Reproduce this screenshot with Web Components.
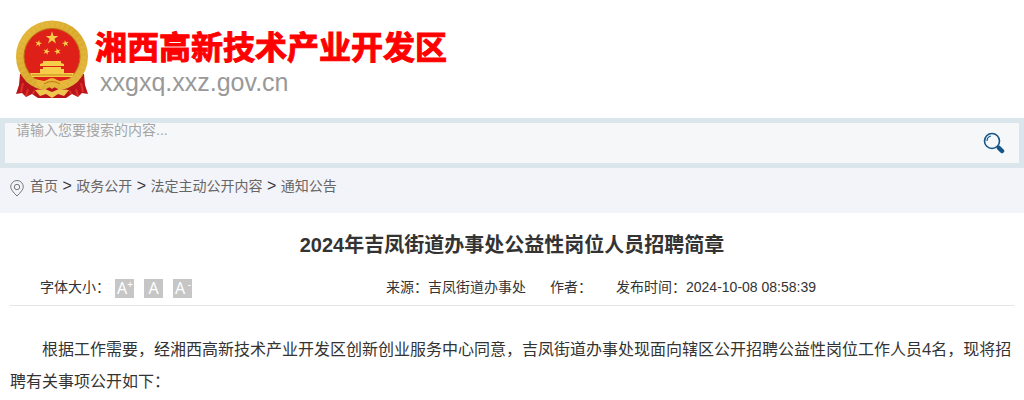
<!DOCTYPE html>
<html lang="zh-CN">
<head>
<meta charset="utf-8">
<title>2024年吉凤街道办事处公益性岗位人员招聘简章</title>
<style>
body { margin: 0; background: #fff; color: #333; font-family: "Liberation Sans", "Noto Sans CJK SC", sans-serif; font-size: 14px; }
</style>
</head>
<body>
<gov-page></gov-page>

<template id="t-page">
<style>
:host { display: block; }
</style>
<site-header></site-header>
<site-search></site-search>
<bread-crumb></bread-crumb>
<news-article>
  <span slot="title">2024年吉凤街道办事处公益性岗位人员招聘简章</span>
  <article-meta slot="meta"></article-meta>
  <span slot="body">根据工作需要，经湘西高新技术产业开发区创新创业服务中心同意，吉凤街道办事处现面向辖区公开招聘公益性岗位工作人员4名，现将招聘有关事项公开如下：</span>
</news-article>
</template>

<template id="t-emblem">
<style>
:host { display: block; }
svg { display: block; }
</style>
<svg width="74" height="80" viewBox="0 0 74 80" aria-hidden="true">
  <defs>
    <path id="star" d="M0-10 2.3-3.1H9.5L3.7 1.2 5.9 8.1 0 3.8-5.9 8.1-3.7 1.2-9.5-3.1H-2.3Z"/>
    <linearGradient id="gold" x1="0" y1="0" x2="1" y2="1">
      <stop offset="0" stop-color="#e6ba3d"/><stop offset=".5" stop-color="#d9a92c"/><stop offset="1" stop-color="#e6ba42"/>
    </linearGradient>
  </defs>
  <path d="M5 54 4 65 1 74 7 73 11 77 17 74 23 78H51L57 74 63 77 67 73 73 74 70 65 69 54Z" fill="#b9141a"/>
  <path d="M8 63 6 72M14 66 11 76M20 68 18 74M60 66 63 76M66 63 68 72M54 68 56 74" stroke="#df302a" stroke-width="2"/>
  <circle cx="37" cy="36.500" r="36" fill="url(#gold)"/>
  <circle cx="37" cy="36.500" r="32" fill="none" stroke="#f0cb57" stroke-width="5" stroke-dasharray="2 3" opacity=".25"/>
  <circle cx="37" cy="36.500" r="28" fill="#df2018" stroke="#bd6d18"/>
  <g fill="#f6cc48">
    <use href="#star" transform="translate(37 18) scale(.67)"/>
    <use href="#star" transform="translate(23.500 23.500) rotate(10) scale(.36)"/>
    <use href="#star" transform="translate(50.500 23.500) rotate(-10) scale(.36)"/>
    <use href="#star" transform="translate(31.500 31.500) rotate(15) scale(.36)"/>
    <use href="#star" transform="translate(42.500 31.500) rotate(-15) scale(.36)"/>
    <path d="M28 41H46V43L49 44V46H25V44L28 43ZM28 47H46V49H28ZM25 49H49V53H59L57 57H17L15 53H25Z"/>
  </g>
  <path d="M17 55H57" stroke="#c58918"/>
  <path d="M11 62Q23 71 31 69Q37 65 43 69Q51 71 63 62L62 69 53 71 48 77H26L21 71 12 69Z" fill="#b9141a"/>
  <path d="M20 59 29 61 32 60Q37 56 42 60L45 61 54 59 50 67 42 65 37 69 32 65 24 67Z" fill="#e8b63b"/>
  <path d="M29 64Q37 59 45 64" fill="none" stroke="#bd7719"/>
  <path d="M20 70 30 69 37 72 44 69 54 70 49 76 43 74 37 78 31 74 25 76Z" fill="#efc650"/>
</svg>
</template>

<template id="t-header">
<style>
:host { display: block; }
header { display: flex; padding: 20px 15px 18px; gap: 6px; }
h1 { margin: 1px 0 0; font: 700 32px/48px "Noto Sans CJK SC", sans-serif; color: #f00; -webkit-text-stroke: 1px #f00; white-space: nowrap; }
p { margin: 2px 0 0 5px; font-size: 25px; line-height: 22px; color: #999; }
</style>
<header>
  <state-emblem></state-emblem>
  <div><h1>湘西高新技术产业开发区</h1><p>xxgxq.xxz.gov.cn</p></div>
</header>
</template>

<template id="t-search">
<style>
:host { display: block; }
form { display: flex; align-items: flex-start; border: 5px solid #dbe5ec; background: #f5f7f9; height: 40px; }
input { flex: 1; min-width: 0; height: 14px; margin: 0; padding: 0 11px; border: 0; outline: 0; background: none; font: inherit; color: #333; }
input::placeholder { color: #a5a5a5; opacity: 1; }
button { width: 50px; height: 40px; padding: 0; border: 0; background: none; display: grid; place-items: center; cursor: pointer; }
</style>
<form role="search">
  <input type="text" placeholder="请输入您要搜索的内容..." aria-label="搜索">
  <button type="button" aria-label="搜索">
    <svg width="22" height="22" viewBox="0 0 22 22" fill="none" stroke="#155488">
      <circle cx="9" cy="9" r="7.500" stroke-width="1.600"/>
      <path d="M4 9Q4 5 8 4" stroke-width="1.200"/>
      <path d="m14 14 2 2" stroke-width="2"/>
      <path d="m16 16 3 3" stroke-width="4.500" stroke-linecap="round"/>
    </svg>
  </button>
</form>
</template>

<template id="t-crumb">
<style>
:host { display: block; background: #f3f4f9; }
nav { display: flex; gap: 6px; padding: 8px 10px 16px; font-size: 16px; line-height: 20px; }
svg { display: block; margin-top: 4px; }
a { font-size: 14px; color: #666; text-decoration: none; }
</style>
<nav aria-label="当前位置">
  <svg width="14" height="17" viewBox="0 0 14 17" fill="none" stroke="#777"><path d="M7 16Q.7 10 .7 6.800A6.300 6.300 0 0 1 13.300 6.800Q13.300 10 7 16Z"/><circle cx="7" cy="7" r="2.700"/></svg>
  <div><a href="#">首页</a> &gt; <a href="#">政务公开</a> &gt; <a href="#">法定主动公开内容</a> &gt; <a href="#">通知公告</a></div>
</nav>
</template>

<template id="t-article">
<style>
:host { display: block; padding: 16px 10px; }
h2 { margin: 0; font-size: 20px; line-height: 32px; text-align: center; }
p { margin: 27px 0 0; font: 16px/32px "Noto Sans", "Noto Sans CJK SC", sans-serif; text-indent: 32px; }
</style>
<article>
  <h2><slot name="title"></slot></h2>
  <slot name="meta"></slot>
  <p><slot name="body"></slot></p>
</article>
</template>

<template id="t-meta">
<style>
:host { display: flex; align-items: center; margin-top: 8px; padding: 0 4px 0 30px; height: 36px; border-bottom: 1px solid #e5e5e5; line-height: 20px; white-space: nowrap; }
.size { display: flex; align-items: center; gap: 10px; }
.label { width: 65px; }
.info { flex: 1; display: flex; justify-content: center; gap: 24px; }
button { display: block; position: relative; width: 19px; height: 19px; margin: 2px 0 0; padding: 0 0 0 2px; border: 0; background: #c6c6c6; color: #fff; font: 16px/19px "Noto Sans", sans-serif; text-align: left; }
button.plain { padding: 0; text-align: center; }
sup { position: absolute; right: 1px; top: 0; font-size: 10px; line-height: 11px; }
</style>
<div class="size"><span class="label">字体大小：</span><button type="button" aria-label="放大字体">A<sup>+</sup></button><button type="button" class="plain" aria-label="默认字体">A</button><button type="button" aria-label="缩小字体">A<sup>-</sup></button></div>
<div class="info"><span>来源：吉凤街道办事处</span><span>作者：</span><span>发布时间：2024-10-08 08:58:39</span></div>
</template>

<script>
const register = (name, templateId) => customElements.define(name, class extends HTMLElement {
  constructor() {
    super();
    this.attachShadow({ mode: "open" }).append(document.getElementById(templateId).content.cloneNode(true));
  }
});
register("state-emblem", "t-emblem");
register("site-header", "t-header");
register("site-search", "t-search");
register("bread-crumb", "t-crumb");
register("article-meta", "t-meta");
register("news-article", "t-article");
register("gov-page", "t-page");
</script>
</body>
</html>
